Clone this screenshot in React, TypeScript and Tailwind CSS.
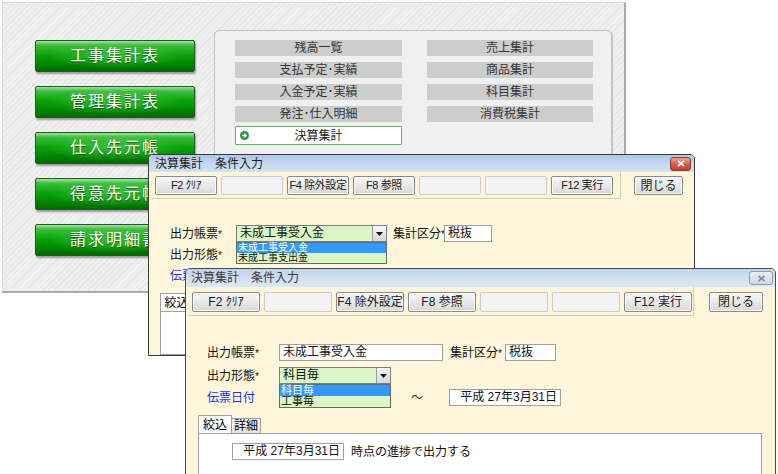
import React from "react";

const FONT = "font-['Liberation_Sans','Noto_Sans_CJK_JP',sans-serif]";

const greenBtn =
  "flex h-[32px] w-[160px] items-center justify-center rounded-[2px] border border-[#1d5c1d] bg-[image:radial-gradient(ellipse_at_center,rgba(140,255,140,0.35),transparent_60%),linear-gradient(to_bottom,#a6e2a6_0%,#3fbc3f_14%,#0aa40a_45%,#008900_75%,#006a00_100%)] text-[16px] tracking-[2px] text-white shadow-[1px_2px_2px_rgba(0,0,0,0.35)] [text-shadow:0_1px_1px_rgba(0,50,0,0.6)]";

const grayBtn =
  "flex h-[16px] items-center justify-center rounded-[1px] bg-[#cdcdcd] text-[12px] text-[#333333]";

const fnBtn =
  "flex items-center justify-center whitespace-nowrap rounded-[2px] border border-[#8a8a8a] bg-[image:linear-gradient(to_bottom,#f7f7f7,#e8e8e8_50%,#d8d8d8)] text-[#1a1a1a] shadow-[inset_0_0_0_1px_#fbfbfb]";

const emptyBtn = "rounded-[2px] border border-[#cacaca] bg-[#f4f4f4]";

function DownArrow() {
  return (
    <svg width="7" height="4" viewBox="0 0 7 4">
      <path d="M0 0h7L3.5 4z" fill="#111" />
    </svg>
  );
}

function GoIcon() {
  return (
    <svg width="9" height="9" viewBox="0 0 9 9">
      <circle cx="4.5" cy="4.5" r="4.5" fill="#2f9a35" />
      <path d="M2 4.5h4M4.3 2.6l1.9 1.9-1.9 1.9" stroke="#fff" strokeWidth="1.3" fill="none" />
    </svg>
  );
}

function Req({ label }: { label: string }) {
  return (
    <span className="whitespace-nowrap">
      {label}
      <span className="text-[10px]">*</span>
    </span>
  );
}

function MenuScreen() {
  const left = ["工事集計表", "管理集計表", "仕入先元帳", "得意先元帳", "請求明細書"];
  const items = [
    "残高一覧",
    "売上集計",
    "支払予定･実績",
    "商品集計",
    "入金予定･実績",
    "科目集計",
    "発注･仕入明細",
    "消費税集計",
  ];
  return (
    <div className="absolute left-[2px] top-[2px] flex h-[291px] w-[624px] border border-[#d8d8d8] border-b-2 border-r-2 border-b-[#a9a9a9] border-r-[#a9a9a9] bg-[image:repeating-linear-gradient(135deg,#efefef_0px,#efefef_3px,#e6e6e6_3px,#e6e6e6_4px)]">
      <div className="flex flex-col gap-[14px] pl-[32px] pt-[37px]">
        {left.map((l) => (
          <div key={l} className={greenBtn}>
            {l}
          </div>
        ))}
      </div>
      <div className="ml-[19px] mt-[27px] h-[250px] w-[398px] rounded-t-[5px] border border-[#c2c2c2] bg-[#f0f0f0] shadow-[1px_1px_1px_rgba(0,0,0,0.18)]">
        <div className="grid grid-cols-[167px_166px] gap-x-[25px] gap-y-[6px] pl-[20px] pt-[9px]">
          {items.map((t) => (
            <div key={t} className={grayBtn}>
              {t}
            </div>
          ))}
          <div className="-mt-[2px] flex h-[19px] items-center rounded-[1px] border border-[#5cb35c] bg-white pl-[1px] pr-[1px]">
            <span className="flex w-[14px] justify-center">
              <GoIcon />
            </span>
            <span className="flex-1 text-center text-[12px] text-[#222]">決算集計</span>
            <span className="w-[14px]" />
          </div>
        </div>
      </div>
    </div>
  );
}

function RedClose() {
  return (
    <div className="flex h-[14px] w-[21px] items-center justify-center rounded-[3px] border border-[#8a3b2e] bg-[image:linear-gradient(to_bottom,#eba391,#d5614a_50%,#c2412b)]">
      <svg width="8" height="7" viewBox="0 0 8 7">
        <path d="M1 0.8l6 5.4M7 0.8l-6 5.4" stroke="#fff" strokeWidth="1.8" />
      </svg>
    </div>
  );
}

function GrayClose() {
  return (
    <div className="flex h-[14px] w-[24px] items-center justify-center rounded-[3px] border border-[#8e9db0] bg-[image:linear-gradient(to_bottom,#e6edf5,#cfd9e5)]">
      <svg width="9" height="7" viewBox="0 0 9 7">
        <path d="M1.5 0.8l6 5.4M7.5 0.8l-6 5.4" stroke="#7d8a99" strokeWidth="1.6" />
      </svg>
    </div>
  );
}

function Select({
  value,
  options,
  w,
}: {
  value: string;
  options: string[];
  w: "w1" | "w2";
}) {
  const wide = w === "w1";
  return (
    <div className={wide ? "relative h-[17px] w-[151px]" : "relative h-[17px] w-[112px]"}>
      <div className="flex h-full border border-[#7d7d7d] bg-[#dbf7c6]">
        <span className="flex-1 pl-[3px] text-[12px] leading-[15px] text-[#111]">{value}</span>
        <span className="flex w-[14px] items-center justify-center border-l border-[#9a9a9a] bg-[image:linear-gradient(to_bottom,#f6f6f6,#d9d9d9)]">
          <DownArrow />
        </span>
      </div>
      <div className="absolute left-0 top-full z-10 w-full border border-[#6a6a6a] bg-[#dbf7c6]">
        {options.map((o, i) => (
          <div
            key={o}
            className={
              i === 0
                ? wide
                  ? "h-[10px] bg-[#3399ff] pl-[1px] text-[10px] leading-[10px] text-white"
                  : "h-[11px] bg-[#3399ff] pl-[1px] text-[11px] leading-[11px] text-white"
                : wide
                  ? "h-[10px] pl-[1px] text-[10px] leading-[10px] text-[#111]"
                  : "h-[11px] pl-[1px] text-[11px] leading-[11px] text-[#111]"
            }
          >
            {o}
          </div>
        ))}
      </div>
    </div>
  );
}

function Window1() {
  const btns = ["F2 ｸﾘｱ", "", "F4 除外設定", "F8 参照", "", "", "F12 実行"];
  return (
    <div className="absolute left-[148px] top-[154px] flex h-[202px] w-[547px] flex-col overflow-hidden rounded-t-[5px] border border-[#3a3a3a] bg-[#fdf6da]">
      <div className="flex h-[17px] shrink-0 items-center justify-between bg-[image:linear-gradient(to_bottom,#adc7e5,#c6d9ef_55%,#d3e2f3)] pl-[6px] pr-[3px]">
        <span className="text-[12px] text-[#1c1c1c]">決算集計　条件入力</span>
        <RedClose />
      </div>
      <div className="flex shrink-0 items-start">
        <div className="ml-[3px] flex gap-[4px] border-b border-r border-[#d6cfb0] pb-[3px] pl-[3px] pr-[7px] pt-[4px]">
          {btns.map((b, i) =>
            b ? (
              <div key={i} className={`${fnBtn} h-[19px] w-[62px] text-[11px] tracking-[-0.4px]`}>
                {b}
              </div>
            ) : (
              <div key={i} className={`${emptyBtn} h-[19px] w-[62px]`} />
            )
          )}
        </div>
        <div className={`${fnBtn} ml-[13px] mt-[4px] h-[19px] w-[49px] text-[12px]`}>閉じる</div>
      </div>

      <div className="ml-[21px] mt-[26px] flex h-[17px] items-center text-[12px] text-[#111]">
        <span className="w-[66px]">
          <Req label="出力帳票" />
        </span>
        <Select value="未成工事受入金" options={["未成工事受入金", "未成工事支出金"]} w="w1" />
        <span className="ml-[6px] w-[51px]">
          <Req label="集計区分" />
        </span>
        <div className="h-[17px] w-[48px] border border-[#a0a0a0] bg-white pl-[3px] leading-[15px]">税抜</div>
      </div>
      <div className="ml-[21px] mt-[4px] flex h-[17px] items-center text-[12px] text-[#111]">
        <span className="w-[66px]">
          <Req label="出力形態" />
        </span>
      </div>
      <div className="ml-[21px] mt-[4px] flex h-[17px] items-center text-[12px] text-[#1a32ff]">
        <span>伝票日付</span>
      </div>
      <div className="ml-[11px] mt-[9px] flex items-end">
        <div className="flex h-[18px] w-[33px] items-center justify-center border border-b-0 border-[#a0a0a0] bg-white text-[12px]">絞込</div>
        <div className="mt-[3px] flex h-[15px] w-[29px] items-center justify-center border border-b-0 border-l-0 border-[#a0a0a0] bg-[#ececec] text-[12px]">詳細</div>
      </div>
      <div className="ml-[11px] w-[520px] flex-1 border border-[#a0a0a0] bg-white" />
    </div>
  );
}

function Window2() {
  const btns = ["F2 ｸﾘｱ", "", "F4 除外設定", "F8 参照", "", "", "F12 実行"];
  return (
    <div className="absolute left-[185px] top-[268px] flex h-[220px] w-[591px] flex-col overflow-hidden rounded-t-[5px] border border-[#4a4a4a] bg-[#fdf6da]">
      <div className="flex h-[18px] shrink-0 items-center justify-between bg-[image:linear-gradient(to_bottom,#bfd3ea,#d2e0f1_55%,#dde8f5)] pl-[5px] pr-[2px]">
        <span className="text-[12px] text-[#3a3a3a]">決算集計　条件入力</span>
        <GrayClose />
      </div>
      <div className="flex shrink-0 items-start">
        <div className="ml-[2px] flex gap-[4px] border-b border-r border-[#d6cfb0] pb-[3px] pl-[4px] pr-[1px] pt-[5px]">
          {btns.map((b, i) =>
            b ? (
              <div key={i} className={`${fnBtn} h-[20px] w-[68px] text-[12px]`}>
                {b}
              </div>
            ) : (
              <div key={i} className={`${emptyBtn} h-[20px] w-[68px]`} />
            )
          )}
        </div>
        <div className={`${fnBtn} ml-[15px] mt-[5px] h-[20px] w-[54px] text-[12px]`}>閉じる</div>
      </div>

      <div className="ml-[21px] mt-[28px] flex h-[17px] items-center text-[12px] text-[#111]">
        <span className="w-[72px]">
          <Req label="出力帳票" />
        </span>
        <div className="h-[17px] w-[164px] border border-[#a0a0a0] bg-white pl-[3px] leading-[15px]">未成工事受入金</div>
        <span className="ml-[7px] w-[55px]">
          <Req label="集計区分" />
        </span>
        <div className="h-[17px] w-[51px] border border-[#a0a0a0] bg-white pl-[3px] leading-[15px]">税抜</div>
      </div>
      <div className="relative z-10 ml-[21px] mt-[6px] flex h-[17px] items-center text-[12px] text-[#111]">
        <span className="w-[72px]">
          <Req label="出力形態" />
        </span>
        <Select value="科目毎" options={["科目毎", "工事毎"]} w="w2" />
      </div>
      <div className="ml-[21px] mt-[5px] flex h-[17px] items-center text-[12px]">
        <span className="w-[204px] text-[#1a32ff]">伝票日付</span>
        <span className="w-[38px] text-[#333]">～</span>
        <div className="h-[17px] w-[112px] border border-[#a0a0a0] bg-white pr-[3px] text-right leading-[15px] text-[#111]">
          平成 27年3月31日
        </div>
      </div>
      <div className="ml-[12px] mt-[9px] flex items-end">
        <div className="flex h-[18px] w-[34px] items-center justify-center border border-b-0 border-[#a0a0a0] bg-white text-[12px]">絞込</div>
        <div className="flex h-[15px] w-[29px] items-center justify-center border border-b-0 border-l-0 border-[#a0a0a0] bg-[image:linear-gradient(to_bottom,#f3f3f3,#e2e2e2)] text-[12px]">詳細</div>
      </div>
      <div className="ml-[12px] w-[564px] flex-1 border border-[#a0a0a0] bg-white">
        <div className="ml-[33px] mt-[9px] flex h-[17px] items-center text-[12px] text-[#111]">
          <div className="h-[17px] w-[112px] border border-[#a0a0a0] bg-white pr-[3px] text-right leading-[15px]">
            平成 27年3月31日
          </div>
          <span className="ml-[7px]">時点の進捗で出力する</span>
        </div>
      </div>
    </div>
  );
}

export default function App() {
  return (
    <div className={`relative h-[474px] w-[778px] overflow-hidden bg-white ${FONT}`}>
      <MenuScreen />
      <Window1 />
      <Window2 />
    </div>
  );
}
